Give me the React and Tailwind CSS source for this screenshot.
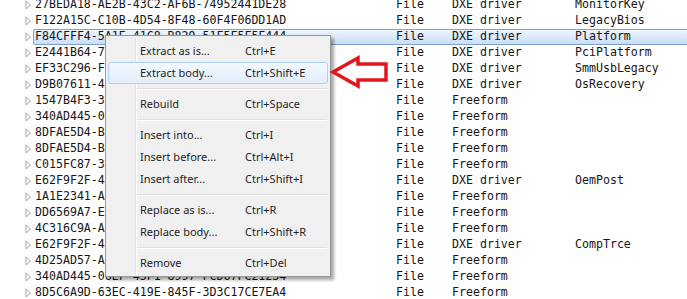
import React from 'react';

const rows = [
  ['27BEDA18-AE2B-43C2-AF6B-74952441DE28', 'File', 'DXE driver', 'MonitorKey'],
  ['F122A15C-C10B-4D54-8F48-60F4F06DD1AD', 'File', 'DXE driver', 'LegacyBios'],
  ['F84CFFF4-5A1E-41C8-B829-51F5F5F5F444', 'File', 'DXE driver', 'Platform', true],
  ['E2441B64-7EF4-41FE-B3A3-8CAA7F8D3017', 'File', 'DXE driver', 'PciPlatform'],
  ['EF33C296-F64C-4146-AD04-347899702C84', 'File', 'DXE driver', 'SmmUsbLegacy'],
  ['D9B07611-4A3E-4A0C-B7F6-2B4A6C3E19F2', 'File', 'DXE driver', 'OsRecovery'],
  ['1547B4F3-3E8A-4FEF-81C8-328ED647AB1A', 'File', 'Freeform', ''],
  ['340AD445-0E5C-4A4C-9F1B-0C4E8A1D2E33', 'File', 'Freeform', ''],
  ['8DFAE5D4-B50E-4C10-96E6-F2C266CACBB6', 'File', 'Freeform', ''],
  ['8DFAE5D4-B50E-4C10-96E6-F2C266CACBB7', 'File', 'Freeform', ''],
  ['C015FC87-3D2A-4B7C-9E1D-5A6F8B2C4D11', 'File', 'Freeform', ''],
  ['E62F9F2F-4A7B-4C1D-8E2F-3B4C5D6E7F80', 'File', 'DXE driver', 'OemPost'],
  ['1A1E2341-A8C2-4F5E-9D3B-6C7A8B9C0D12', 'File', 'Freeform', ''],
  ['DD6569A7-E4B2-4A1C-8F3D-7E8F9A0B1C23', 'File', 'Freeform', ''],
  ['4C316C9A-AFD9-4E1C-8A2B-3C4D5E6F7A89', 'File', 'Freeform', ''],
  ['E62F9F2F-4A7B-4C1D-8E2F-3B4C5D6E7F81', 'File', 'DXE driver', 'CompTrce'],
  ['4D25AD57-A6B3-4C2D-9E4F-5A6B7C8D9E01', 'File', 'Freeform', ''],
  ['340AD445-06EF-43F1-8997-FCD67FC21234', 'File', 'Freeform', ''],
  ['8D5C6A9D-63EC-419E-845F-3D3C17CE7EA4', 'File', 'Freeform', ''],
];

const menu = [
  ['Extract as is...', 'Ctrl+E'],
  ['Extract body...', 'Ctrl+Shift+E', true],
  null,
  ['Rebuild', 'Ctrl+Space'],
  null,
  ['Insert into...', 'Ctrl+I'],
  ['Insert before...', 'Ctrl+Alt+I'],
  ['Insert after...', 'Ctrl+Shift+I'],
  null,
  ['Replace as is...', 'Ctrl+R'],
  ['Replace body...', 'Ctrl+Shift+R'],
  null,
  ['Remove', 'Ctrl+Del'],
];

const Expander = () => (
  <svg width="7" height="10" viewBox="0 0 7 10" className="shrink-0">
    <path d="M1 1 L5.5 5 L1 9 Z" fill="white" stroke="#a6a6a6" strokeWidth="1" />
  </svg>
);

const Row = ({ guid, type, subtype, text, selected }) => (
  <div className="relative flex h-4 items-center">
    {selected && (
      <div className="absolute left-[33px] right-[-4px] top-0 bottom-0 rounded-[2px] border border-[#7da2ce] bg-gradient-to-b from-[#eef5fd] to-[#c9def8]" />
    )}
    <div className="relative flex w-[35px] justify-end pr-[3px]">
      <Expander />
    </div>
    <div className="relative w-[361px] whitespace-nowrap">{guid}</div>
    <div className="relative w-[56px]">{type}</div>
    <div className="relative w-[123px] whitespace-nowrap">{subtype}</div>
    <div className="relative whitespace-nowrap">{text}</div>
  </div>
);

const ContextMenu = () => (
  <div className="absolute left-[105px] top-[35px] w-[226px] border border-[#979797] bg-[#f0f0f0] pt-[4px] pb-[2px] shadow-[3px_3px_3px_rgba(0,0,0,0.35)] font-['Noto_Sans',sans-serif] text-[11px] text-[#1e1e1e]">
    <div className="absolute left-[29px] top-[2px] bottom-[2px] w-[2px] border-l border-[#e2e3e3] bg-white" />
    {menu.map((item, i) =>
      item ? (
        <div
          key={i}
          className={`relative mx-[2px] flex h-[22px] items-center whitespace-nowrap rounded-[3px] border ${
            item[2] ? 'border-[#aecff7] bg-gradient-to-b from-[#f2f8fe] to-[#e2eefc]' : 'border-transparent'
          }`}
        >
          <span className="w-[136px] shrink-0 pl-[31px]">{item[0]}</span>
          <span>{item[1]}</span>
        </div>
      ) : (
        <div key={i} className="relative flex h-[9px] items-center pl-[31px] pr-[3px]">
          <div className="h-[2px] w-full border-t border-[#e0e0e0] bg-white" />
        </div>
      )
    )}
  </div>
);

const RedArrow = () => (
  <svg width="64" height="38" viewBox="0 0 64 38" className="absolute left-[328px] top-[54px]">
    <path
      d="M5 18 L30 4 L30 10 L58 10 L58 26 L30 26 L30 32 Z"
      fill="white"
      stroke="#e3161d"
      strokeWidth="3.5"
      strokeLinejoin="miter"
    />
  </svg>
);

export default function App() {
  return (
    <div className="relative h-[299px] w-[687px] overflow-hidden bg-white font-['DejaVu_Sans_Mono',monospace] text-[11.6px] text-[#151515]">
      <div className="-mt-[3px]">
        {rows.map((r, i) => (
          <Row key={i} guid={r[0]} type={r[1]} subtype={r[2]} text={r[3]} selected={r[4]} />
        ))}
      </div>
      <ContextMenu />
      <RedArrow />
    </div>
  );
}
